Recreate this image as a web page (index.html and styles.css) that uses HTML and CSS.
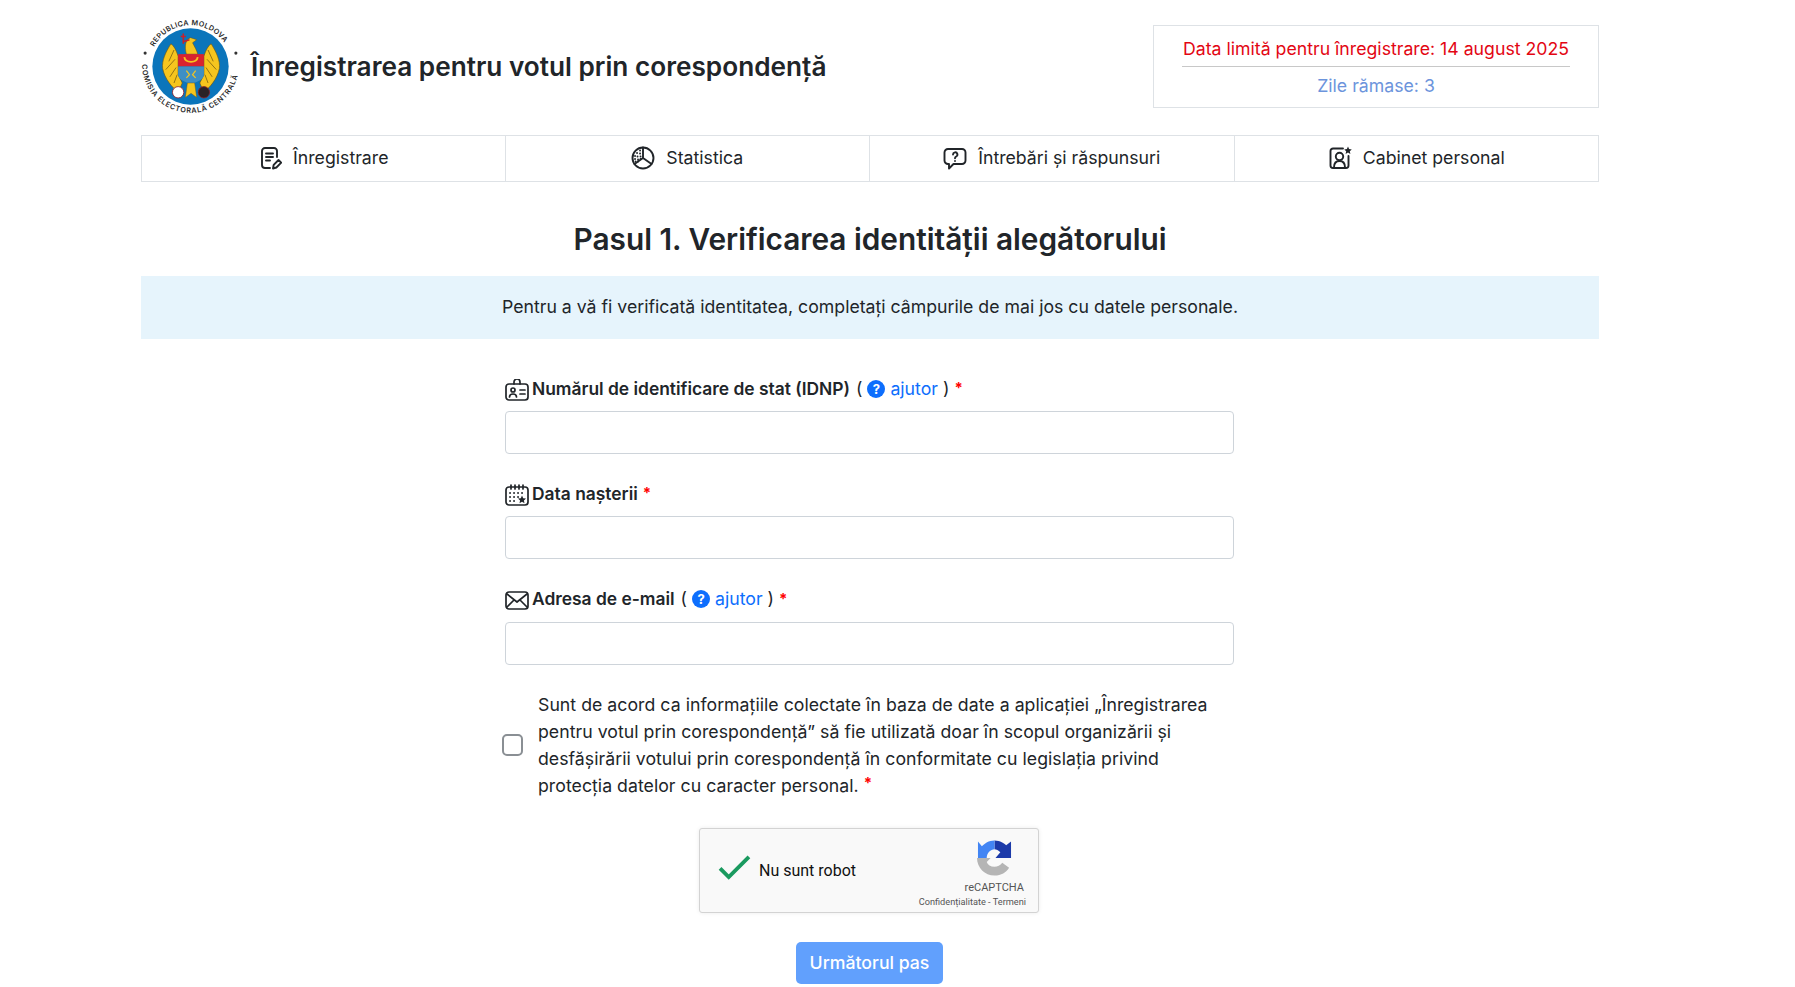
FILE: index.html
```html
<!DOCTYPE html>
<html lang="ro">
<head>
  <meta charset="UTF-8" />
  <meta name="viewport" content="width=device-width, initial-scale=1.0" />
  <title>Înregistrarea pentru votul prin corespondență</title>
  <link rel="stylesheet" href="styles.css">
</head>
<body>
  <div class="pagina">
    <header class="antet">
      <div class="antet-stanga">
        <svg class="logo" viewBox="2 3 96 98" aria-hidden="true">
          <defs>
            <path id="arc-sus" d="M14.700 33.200 A40 40 0 0 1 85.300 33.200" />
            <path id="arc-jos" d="M3 50 A47 47 0 0 0 97 50" />
          </defs>
          <circle cx="50" cy="52" r="37" fill="#0b75bb" />
          <text class="logo-text"><textPath href="#arc-sus">REPUBLICA MOLDOVA</textPath></text>
          <text class="logo-text logo-text-jos"><textPath href="#arc-jos">COMISIA ELECTORALĂ CENTRALĂ</textPath></text>
          <circle cx="6" cy="39" r="1.500" fill="#333" />
          <circle cx="94" cy="39" r="1.500" fill="#333" />
          <path d="M38 42 C36 36 34 32 31 30 C26 38 22 46 23 54 C25 64 32 72 38 77 L42 68 L38 60 Z" fill="#f6c51e" stroke="#6b5410" stroke-width=".6" />
          <path d="M63 42 C65 36 67 32 70 30 C75 38 79 46 78 54 C76 64 69 72 63 77 L59 68 L63 60 Z" fill="#f6c51e" stroke="#6b5410" stroke-width=".6" />
          <path d="M34 36 L29 47 M35 45 L26 55 M36 53 L30 62 M37 60 L34 68 M67 36 L72 47 M66 45 L75 55 M65 53 L71 62 M64 60 L67 68" stroke="#6b5410" stroke-width=".7" fill="none" />
          <path d="M46 40 C44 32 45 26 50 24 L56 26 L52 29 C54 33 56 36 57 40 Z" fill="#f6c51e" stroke="#6b5410" stroke-width=".5" />
          <path d="M43 20 V30 M40.500 23 H45.500 M43 28 L49 26" stroke="#c8202c" stroke-width="1.500" fill="none" />
          <path d="M38 40 H63 V52 H38 Z" fill="#d9232e" />
          <path d="M38 52 H63 V60 C63 65 56 67 50.500 69 C45 67 38 65 38 60 Z" fill="#3f8fc4" />
          <path d="M44 43 C45 49 56 49 57 43" stroke="#f6c51e" stroke-width="1.800" fill="none" />
          <path d="M46 56 L49 60 L46 63 M55 56 L52 60 L55 63" stroke="#f6c51e" stroke-width="1.200" fill="none" />
          <path d="M47 68 H54 L56 82 L50.500 78 L45 82 Z" fill="#f6c51e" stroke="#6b5410" stroke-width=".4" />
          <circle cx="38" cy="77" r="5.500" fill="#fff" stroke="#8c1d24" stroke-width=".8" />
          <circle cx="63" cy="77" r="5.500" fill="#2a2226" stroke="#8c1d24" stroke-width=".8" />
        </svg>
        <h2 class="titlu">Înregistrarea pentru votul prin corespondenţă</h2>
      </div>
      <div class="termen">
        <div class="termen-data">Data limită pentru înregistrare: 14 august 2025</div>
        <div class="termen-zile">Zile rămase: 3</div>
      </div>
    </header>

    <nav class="meniu">
      <a class="meniu-item" href="#">
        <svg class="icon" viewBox="0 0 24 24"><path d="M19 11V5a3 3 0 0 0-3-3H7a3 3 0 0 0-3 3v14a3 3 0 0 0 3 3h5" /><path d="M8 7.500h7M8 11h7M8 14.500h4" /><path d="M15 22.500l.7-3.700 4.800-4.800 2.700 2.700-4.800 4.800z" /></svg>
        Înregistrare
      </a>
      <a class="meniu-item" href="#">
        <svg class="icon" viewBox="0 0 24 24"><circle cx="12" cy="12" r="10.500" /><path d="M12 1.500V12l8.500 6M12 12l-8.500 6" /><path class="puncte" d="M9 4.500h.1M6 7h.1M9 7.500h.1M4 10h.1M6.500 10.500h.1M9.500 10.500h.1M4 13h.1M7 13.500h.1M9.500 13h.1M4.500 15.500h.1M7 15.500h.1" /></svg>
        Statistica
      </a>
      <a class="meniu-item" href="#">
        <svg class="icon" viewBox="0 0 24 24"><path d="M5 3h14a3.500 3.500 0 0 1 3.500 3.500v8a3.500 3.500 0 0 1-3.500 3.500H10.500L6 22.500V18H5a3.500 3.500 0 0 1-3.500-3.500v-8A3.500 3.500 0 0 1 5 3z" /><path d="M10 8.500a2.200 2.200 0 1 1 3.200 2c-.8.400-1.200.9-1.200 1.700" /><path d="M12 15v.1" /></svg>
        Întrebări și răspunsuri
      </a>
      <a class="meniu-item" href="#">
        <svg class="icon" viewBox="0 0 24 24"><path d="M15 2.500H5A2.500 2.500 0 0 0 2.500 5v14.500A2.500 2.500 0 0 0 5 22h13a2.500 2.500 0 0 0 2.500-2.500V10" /><circle cx="11.500" cy="10.500" r="3.700" /><path d="M6 21.500c0-4.500 2.500-6.500 5.500-6.500s5.500 2 5.500 6.500" /><path class="plin" d="M20 .5l1.100 2.600 2.700.3-2 1.800.6 2.700-2.400-1.400-2.400 1.400.6-2.700-2-1.800 2.700-.3z" /></svg>
        Cabinet personal
      </a>
    </nav>

    <h3 class="pas">Pasul 1. Verificarea identităţii alegătorului</h3>
    <div class="info">Pentru a vă fi verificată identitatea, completați câmpurile de mai jos cu datele personale.</div>

    <form class="formular">
      <div class="camp">
        <label class="eticheta">
          <svg class="icon-camp" viewBox="0 0 24 22"><rect x="1" y="5" width="22" height="16" rx="3" /><path d="M9 5V3a3 3 0 0 1 6 0v2" /><circle cx="8" cy="11" r="2" /><path d="M4.500 18c0-2 1.500-3 3.500-3s3.500 1 3.500 3M15 11h5M15 15h5" /></svg>
          <b>Numărul de identificare de stat (IDNP)</b>
          <span class="ajutor">( <i class="semn">?</i> <a href="#">ajutor</a> )</span>
          <span class="obligatoriu">*</span>
        </label>
        <input class="intrare" type="text">
      </div>

      <div class="camp">
        <label class="eticheta">
          <svg class="icon-camp" viewBox="0 0 24 22"><rect x="1" y="3" width="22" height="18" rx="3" /><path d="M6 1v4M10 1v4M14 1v4M18 1v4" /><path class="puncte" d="M5 9h.1M9 9h.1M13 9h.1M17 9h.1M5 13h.1M9 13h.1M13 13h.1M5 17h.1M9 17h.1" /><path class="plin" d="M17 11.500l1.200 2.700 2.800.3-2.100 1.900.6 2.800-2.500-1.400-2.500 1.400.6-2.800-2.100-1.900 2.800-.3z" /></svg>
          <b>Data nașterii</b>
          <span class="obligatoriu">*</span>
        </label>
        <input class="intrare" type="text">
      </div>

      <div class="camp">
        <label class="eticheta">
          <svg class="icon-camp" viewBox="0 0 24 22"><rect x="1" y="3" width="22" height="17" rx="3" /><path d="M2 5l10 8 10-8M2 18l7-7M22 18l-7-7" /></svg>
          <b>Adresa de e-mail</b>
          <span class="ajutor">( <i class="semn">?</i> <a href="#">ajutor</a> )</span>
          <span class="obligatoriu">*</span>
        </label>
        <input class="intrare" type="text">
      </div>

      <div class="acord">
        <input class="bifa" type="checkbox">
        <p class="acord-text">Sunt de acord ca informațiile colectate în baza de date a aplicației „Înregistrarea pentru votul prin corespondenţă” să fie utilizată doar în scopul organizării și desfășirării votului prin corespondență în conformitate cu legislația privind protecția datelor cu caracter personal. <span class="obligatoriu">*</span></p>
      </div>

      <div class="captcha">
        <svg class="captcha-bifa" viewBox="0 0 34 26"><path d="M2 14l9 9L32 2" /></svg>
        <span class="captcha-text">Nu sunt robot</span>
        <div class="captcha-marca">
          <svg class="captcha-logo" viewBox="0 0 36 36">
            <path d="M18 0C24 0 28 3 30 5L35 1V18H19L24 12C22 10 20 9 18 9Z" fill="#1c3aa9" />
            <path d="M18 0C12 0 8 3 5 6L1 1V18H10C10 13 14 9 18 9Z" fill="#4285f4" />
            <path d="M0 18C0 28 8 36 18 36C25 36 30 33 33 28L26 23C24 26 21 27 18 27C14 27 11 25 10 22L14 18Z" fill="#b5b5b5" />
          </svg>
          <span class="captcha-nume">reCAPTCHA</span>
          <span class="captcha-legal">Confidențialitate - Termeni</span>
        </div>
      </div>

      <button class="urmator" type="button" disabled>Următorul pas</button>
    </form>
  </div>
</body>
</html>
```

FILE: styles.css
```css
body {
  margin: 0;
  font-family: Inter, 'Noto Sans', sans-serif;
  color: #212529;
  background: #fff;
  font-size: 17.700px;
}

.pagina {
  width: 1458px;
  margin-left: 141px;
}

.antet {
  display: flex;
  justify-content: space-between;
  align-items: center;
  height: 135px;
  box-sizing: border-box;
  padding-bottom: 3px;
}

.antet-stanga {
  display: flex;
  align-items: center;
  gap: 11px;
}

.logo {
  width: 99px;
  height: 103px;
}

.logo-text {
  font-size: 7px;
  font-weight: 600;
  fill: #2b2b2b;
  letter-spacing: .3px;
}

.logo-text-jos {
  letter-spacing: .7px;
}

.titlu {
  margin: 0;
  font-size: 26.200px;
  font-weight: 600;
}

.termen {
  width: 446px;
  height: 83px;
  box-sizing: border-box;
  border: 1px solid #dee2e6;
  padding: 5px 28px;
  text-align: center;
}

.termen-data {
  color: #e30613;
  line-height: 35px;
  border-bottom: 1px solid #c8c8c8;
  margin-bottom: 1px;
}

.termen-zile {
  color: #6c94dc;
  line-height: 35px;
}

.meniu {
  display: grid;
  grid-template-columns: repeat(4, 1fr);
}

.meniu-item {
  display: flex;
  align-items: center;
  justify-content: center;
  gap: 11px;
  height: 47px;
  box-sizing: border-box;
  padding-bottom: 2px;
  color: #212529;
  text-decoration: none;
  border: 1px solid #dee2e6;
  border-left: none;
}

.meniu-item:first-child {
  border-left: 1px solid #dee2e6;
}

.icon {
  width: 24px;
  height: 24px;
  fill: none;
  stroke: #212529;
  stroke-width: 1.900;
  stroke-linecap: round;
  stroke-linejoin: round;
}

.icon .puncte,
.icon-camp .puncte {
  stroke-width: 1.800;
}

.icon .plin,
.icon-camp .plin {
  fill: #212529;
  stroke: none;
}

.pas {
  margin: 37px 0 17px;
  text-align: center;
  font-size: 29.800px;
  font-weight: 600;
  line-height: 40px;
}

.info {
  background: #e6f4fc;
  text-align: center;
  height: 63px;
  line-height: 62px;
}

.formular {
  width: 729px;
  margin-left: 364px;
  padding-top: 26px;
}

.camp {
  margin-bottom: 16.400px;
}

.eticheta {
  display: flex;
  align-items: center;
  gap: 3px;
  height: 46px;
}

.eticheta b {
  font-size: 17.400px;
  font-weight: 600;
}

.eticheta .obligatoriu {
  margin-left: 2px;
}

.icon-camp {
  width: 24px;
  height: 22px;
  fill: none;
  stroke: #212529;
  stroke-width: 1.700;
  stroke-linecap: round;
  stroke-linejoin: round;
  margin-top: 3px;
}

.ajutor {
  margin-left: 3px;
}

.ajutor a {
  color: #0d6efd;
  text-decoration: none;
}

.semn {
  display: inline-block;
  width: 18px;
  height: 18px;
  border-radius: 50%;
  background: #0d6efd;
  color: #fff;
  font-size: 13px;
  font-style: normal;
  font-weight: 700;
  line-height: 18px;
  text-align: center;
  vertical-align: 1px;
}

.obligatoriu {
  color: #f00;
  font-weight: 700;
  vertical-align: 4px;
  font-size: 15px;
  line-height: 0;
}

.intrare {
  display: block;
  width: 100%;
  height: 43px;
  box-sizing: border-box;
  border: 1px solid #ced4da;
  border-radius: 4px;
  background: #fff;
}

.acord {
  display: flex;
  align-items: center;
  gap: 15px;
  margin: 26px 0 29px -3px;
}

.bifa {
  appearance: none;
  flex: none;
  width: 21px;
  height: 22px;
  margin: 0;
  border: 2px solid #8a8f94;
  border-radius: 5px;
  background: #fff;
}

.acord-text {
  margin: 0;
  font-size: 17.700px;
  letter-spacing: .03px;
  line-height: 27px;
}

.captcha {
  display: flex;
  align-items: center;
  width: 340px;
  height: 85px;
  box-sizing: border-box;
  margin: 0 0 29px 194px;
  padding: 0 12px 0 18px;
  background: #f9f9f9;
  border: 1px solid #d3d3d3;
  border-radius: 3px;
  box-shadow: 0 0 4px rgba(0, 0, 0, .08);
  font-family: Roboto, sans-serif;
}

.captcha-bifa {
  width: 33px;
  height: 25px;
  fill: none;
  stroke: #1a9a5f;
  stroke-width: 4;
  margin: -6px 8px 0 0;
}

.captcha-text {
  font-size: 16px;
  color: #111;
}

.captcha-marca {
  display: flex;
  flex-direction: column;
  align-items: flex-end;
  align-self: flex-end;
  margin-left: auto;
  margin-bottom: 5px;
}

.captcha-logo {
  width: 35px;
  height: 36px;
  margin-right: 14px;
}

.captcha-nume {
  font-size: 11px;
  color: #555;
  margin-top: 5px;
  margin-right: 2px;
}

.captcha-legal {
  font-size: 9.200px;
  color: #555;
  margin-top: 2px;
}

.urmator {
  display: block;
  width: 147px;
  height: 42px;
  margin: 0 auto;
  background: #0d6efd;
  opacity: .65;
  color: #fff;
  border: none;
  border-radius: 5px;
  font-family: inherit;
  font-size: 17.700px;
  font-weight: 500;
}
```
